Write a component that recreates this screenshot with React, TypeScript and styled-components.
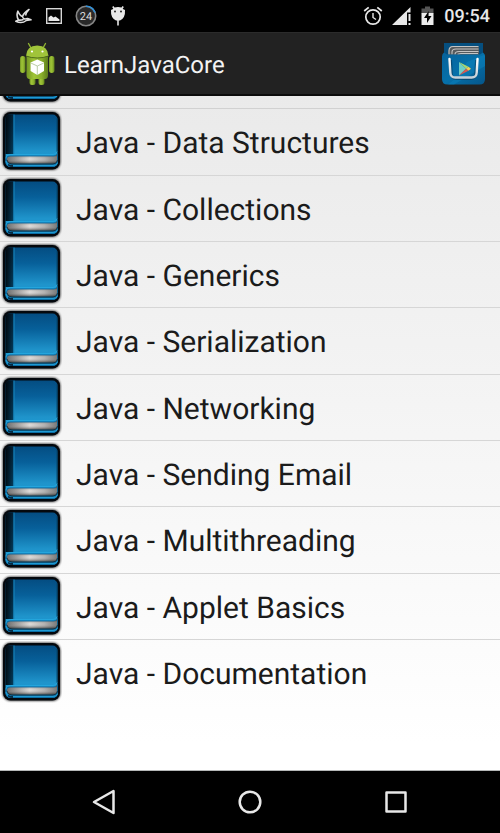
import React from "react";
import styled, { createGlobalStyle } from "styled-components";

const GlobalStyle = createGlobalStyle`
  * { box-sizing: border-box; }
  body {
    margin: 0;
    background: #000;
    font-family: Roboto, "Liberation Sans", sans-serif;
    text-rendering: geometricPrecision;
  }
`;

const Screen = styled.div`
  display: flex;
  flex-direction: column;
  min-height: 100vh;
  background: #000;
`;

const StatusBar = styled.div`
  display: flex;
  align-items: center;
  justify-content: space-between;
  height: 32px;
  padding: 0 10px 0 15px;
  background: #000;
`;

const StatusGroup = styled.div<{ $gap: number }>`
  display: flex;
  align-items: center;
  gap: ${(p) => p.$gap}px;
  svg { display: block; }
`;

const Clock = styled.time`
  padding-top: 2px;
  color: #e8e8e8;
  font-size: 18px;
  font-weight: 500;
  line-height: 24px;
`;

const ActionBar = styled.header`
  display: flex;
  align-items: center;
  height: 64px;
  padding: 0 15px 0 19px;
  background: #222;
  border-top: 1px solid #2b2b2b;
  border-bottom: 2px solid #0c0c0c;
  svg { display: block; }
`;

const Title = styled.h1`
  flex: 1;
  margin: 0 0 0 7px;
  padding-top: 2px;
  color: #f3f3f3;
  font-size: 24px;
  font-weight: 400;
  line-height: 32px;
`;

const StoreButton = styled.button`
  padding: 0;
  border: 0;
  background: none;
  cursor: pointer;
`;

const Content = styled.main`
  flex: 1;
  background: linear-gradient(#eaeaea, #fff 96%);
  border-bottom: 1px solid #b5b8b8;
`;

const List = styled.ul`
  margin: 0;
  padding: 0;
  list-style: none;
`;

const ClippedRow = styled.li`
  display: flex;
  align-items: flex-end;
  height: 13px;
  padding: 0 0 4px 1px;
  overflow: hidden;
  border-bottom: 1px solid #d1d1d1;
  svg { display: block; flex: none; }
`;

const Row = styled.li`
  height: 66px;
  border-bottom: 1px solid #d6d6d6;
  &:nth-child(3n + 2) { height: 67px; }
  &:last-child { border-bottom-color: transparent; }
`;

const RowButton = styled.button`
  display: flex;
  align-items: center;
  gap: 14px;
  width: 100%;
  height: 100%;
  padding: 0 0 2px 1px;
  border: 0;
  background: none;
  color: #1b1b1b;
  font-family: inherit;
  font-size: 30px;
  line-height: 36px;
  text-align: left;
  text-rendering: inherit;
  cursor: pointer;
  svg { display: block; flex: none; }
`;

const RowLabel = styled.span`
  padding-top: 6px;
`;

const NavBar = styled.nav`
  display: flex;
  align-items: center;
  justify-content: space-around;
  height: 62px;
  padding: 0 31px;
  background: #000;
`;

const NavButton = styled.button`
  display: flex;
  align-items: center;
  justify-content: center;
  width: 60px;
  height: 48px;
  padding: 0;
  border: 0;
  background: none;
  cursor: pointer;
`;

const Gradients = () => (
  <svg width="0" height="0" display="block" aria-hidden="true">
    <defs>
      <linearGradient id="cover" x1="0" y1="0" x2="0" y2="1">
        <stop offset="0" stopColor="#044d82" />
        <stop offset="0.3" stopColor="#07609a" />
        <stop offset="0.7" stopColor="#1f94cb" />
        <stop offset="1" stopColor="#1b9ad6" />
      </linearGradient>
      <linearGradient id="spine" x1="0" y1="0" x2="0" y2="1">
        <stop offset="0" stopColor="#02253f" />
        <stop offset="1" stopColor="#04466b" />
      </linearGradient>
      <linearGradient id="spineShade" x1="0" y1="0" x2="1" y2="0">
        <stop offset="0" stopColor="#000" stopOpacity="0.8" />
        <stop offset="1" stopColor="#000" stopOpacity="0.1" />
      </linearGradient>
      <linearGradient id="pages" x1="0" y1="0" x2="1" y2="0">
        <stop offset="0" stopColor="#5a5a5a" />
        <stop offset="0.45" stopColor="#dad7d4" />
        <stop offset="0.75" stopColor="#aaa9a8" />
        <stop offset="1" stopColor="#666" />
      </linearGradient>
      <linearGradient id="pageShade" x1="0" y1="0" x2="0" y2="1">
        <stop offset="0" stopColor="#111" stopOpacity="0.65" />
        <stop offset="0.5" stopColor="#fff" stopOpacity="0.1" />
        <stop offset="1" stopColor="#111" stopOpacity="0.6" />
      </linearGradient>
      <filter id="soft" x="-10%" y="-10%" width="120%" height="120%">
        <feGaussianBlur stdDeviation="0.8" />
      </filter>
      <linearGradient id="droid" x1="0" y1="0" x2="1" y2="0">
        <stop offset="0" stopColor="#739623" />
        <stop offset="0.35" stopColor="#a0c538" />
        <stop offset="0.7" stopColor="#8bb02c" />
        <stop offset="1" stopColor="#5d7d1c" />
      </linearGradient>
      <linearGradient id="store" x1="0" y1="0" x2="1" y2="1">
        <stop offset="0" stopColor="#07629b" />
        <stop offset="0.5" stopColor="#0670a9" />
        <stop offset="1" stopColor="#05568a" />
      </linearGradient>
      <linearGradient id="handle" x1="0" y1="0" x2="0" y2="1">
        <stop offset="0" stopColor="#fff" />
        <stop offset="1" stopColor="#c5d0d8" />
      </linearGradient>
    </defs>
  </svg>
);

const BookIcon = () => (
  <svg width="61" height="62" viewBox="0 0 61 62" aria-hidden="true">
    <rect x="1.5" y="1.5" width="58" height="58.5" rx="8" fill="#000" opacity="0.75" filter="url(#soft)" />
    <rect x="2" y="2" width="57" height="57.5" rx="7.500" fill="#04080d" />
    <rect x="4.500" y="4.500" width="52" height="52.500" rx="5" fill="url(#cover)" />
    <path d="M9 4.500h3.500V44H4.500V9q0-4.500 4.500-4.500z" fill="url(#spine)" />
    <path d="M9 4.500h3.500V44H4.500V9q0-4.500 4.500-4.500z" fill="url(#spineShade)" />
    <path d="M13 4.500V44" stroke="#1687be" strokeWidth="1" />
    <path d="M56 8v34" stroke="#064568" strokeWidth="1.200" opacity="0.7" />
    <path d="M56.500 43q-1 2.500-4 2.500H9.500q-5 0-5 4v2q0 5.500 6 5.500h41q5 0 5-5z" fill="#0b6ea5" />
    <path d="M56 41.500q-1 3-4 3H9.500q-4.500 0-4.500 4" fill="none" stroke="#23a5dc" strokeWidth="1" />
    <path d="M6 49q0-2.500 3.500-2.500h43q2.500 0 3.500-2v5q0 4-4 4H10q-4 0-4-4.500z" fill="url(#pages)" />
    <path d="M6 49q0-2.500 3.500-2.500h43q2.500 0 3.500-2v5q0 4-4 4H10q-4 0-4-4.500z" fill="url(#pageShade)" />
    <path d="M6 50q.5 4 5 4h41q4 0 4.500-4" fill="none" stroke="#102631" strokeWidth="0.8" />
    <path d="M5 51q1 4.500 6 4.500h41q4 0 4.500-3" fill="none" stroke="#1f9ad2" strokeWidth="1.200" />
    <path d="M7 55.500q2 1.500 5 1.500v-2q-3 0-5-1z" fill="#042b45" />
  </svg>
);

const AndroidIcon = () => (
  <svg width="38" height="44" viewBox="0 0 38 44" aria-hidden="true">
    <path d="M12 6l-2.500-4.500M24 6l2.500-4.500" stroke="#91b532" strokeWidth="1.400" strokeLinecap="round" />
    <rect x="1" y="14" width="5.500" height="17" rx="2.700" fill="url(#droid)" />
    <rect x="30" y="14" width="5.500" height="17" rx="2.700" fill="url(#droid)" />
    <rect x="10.500" y="30" width="6" height="13" rx="2.500" fill="url(#droid)" />
    <rect x="19.500" y="30" width="6" height="13" rx="2.500" fill="url(#droid)" />
    <path d="M7.500 15h21.500v18q0 4-3 4H10.500q-3 0-3-4z" fill="url(#droid)" />
    <path d="M7 14q.5-10.500 11.200-10.500T29.500 14q-5 2-11.300 2T7 14z" fill="#a0c43a" />
    <path d="M7 14q5 2 11.200 2t11.300-2" fill="none" stroke="#4e6c19" strokeWidth="1" />
    <circle cx="13" cy="9.500" r="1.100" fill="#fff" />
    <circle cx="23.500" cy="9.500" r="1.100" fill="#fff" />
    <path d="M18.300 17.500l6.700 3v8.500l-6.700 4-6.700-4v-8.500z" fill="#fff" />
    <path d="M11.800 21l6.500 3 6.500-3M18.300 24v9" fill="none" stroke="#b3c69c" strokeWidth="0.900" />
  </svg>
);

const StoreIcon = () => (
  <svg width="43" height="44" viewBox="0 0 43 44" aria-hidden="true">
    <path d="M2 1h39v13H2z" fill="#064f7f" />
    <path d="M6.500 13V8.500Q6.500 4 11 4h24q2 0 2 2v7z" fill="#565b5e" />
    <path d="M7 12.500V9q0-4.500 4-4.500h25.500M10 12.500V10q0-3 4-3h22.500M13 12.500q0-3 4-3h19.500M16 12.500q0-1 3-1h17" fill="none" stroke="#c4c4c4" strokeWidth="1.100" />
    <path d="M2 10.500l3 2h33l3-2q2 1.500 2 4V37q0 5.500-5.500 5.500h-32Q0 42.500 0 37V14.500q0-2.500 2-4z" fill="url(#store)" />
    <path d="M25 20L43 12.500V24L12 42.500H6L17 34z" fill="#0a86c2" opacity="0.450" />
    <path d="M8.500 18l.8 13.500q.2 5 5 5h14.500q4.800 0 5-5L34.600 18" fill="none" stroke="#06385c" strokeWidth="3" opacity="0.600" />
    <path d="M7.500 17l.8 13.500q.2 5 5 5h16.400q4.800 0 5-5L35.500 17" fill="none" stroke="url(#handle)" strokeWidth="2.400" strokeLinecap="round" />
    <path d="M17 20v13.500l7-6.700z" fill="#6ecfc5" />
    <path d="M17 20l9.500 4.800-2.500 2z" fill="#a8d56f" />
    <path d="M24 26.800l2.500-2 2.500 2-2.500 2z" fill="#f4ce54" />
    <path d="M17 33.500l7-6.700 2.500 2z" fill="#d75b50" />
  </svg>
);

const BirdIcon = () => (
  <svg width="18" height="16" viewBox="0 0 18 16" aria-hidden="true">
    <path d="M2.800 3.200Q1 8 3.500 12L.8 13.200q6 3 10.400-.7l4.800-.7-3.500-1.300Q8 12 7.500 8.500 5 8 2.800 3.200zM7.500 8.500Q9 4.500 14 1.500q-3 3-3.500 6M3.500 12q2.500.5 5-.5" fill="none" stroke="#dedede" strokeWidth="1.600" strokeLinejoin="round" />
  </svg>
);

const PictureIcon = () => (
  <svg width="16" height="16" viewBox="0 0 16 16" aria-hidden="true">
    <rect x="0.700" y="0.700" width="14.600" height="14.600" fill="none" stroke="#d7d7d7" strokeWidth="1.400" />
    <path d="M2.500 13V9.500L5 7.500l2.500 2 2-1 4 3V13z" fill="#e8e8e8" />
  </svg>
);

const BadgeIcon = () => (
  <svg width="22" height="22" viewBox="0 0 22 22" role="img" aria-label="24">
    <circle cx="11" cy="11" r="9.700" fill="#292929" stroke="#858585" strokeWidth="1.600" />
    <path d="M11 1.300A9.700 9.700 0 0 1 20 7.500" fill="none" stroke="#2e91dc" strokeWidth="1.600" />
    <text x="11" y="15" textAnchor="middle" fontSize="11" fontFamily="Roboto, sans-serif" fill="#ddd">24</text>
  </svg>
);

const DebugIcon = () => (
  <svg width="16" height="22" viewBox="0 0 16 22" aria-hidden="true">
    <path d="M4.500 4L2.800 1.500M11.500 4l1.700-2.500M8 14v6.500" stroke="#e5e5e5" strokeWidth="1.600" />
    <path d="M1 5q2.500-1 3.500-2.500Q8 1.500 11.500 2.500 12.500 4 15 5q.5 8-5 10.500H6Q.5 13 1 5z" fill="#e8e8e8" />
    <circle cx="5" cy="6.500" r="0.900" fill="#111" />
    <circle cx="11" cy="6.500" r="0.900" fill="#111" />
  </svg>
);

const AlarmIcon = () => (
  <svg width="20" height="20" viewBox="0 0 20 20" fill="none" stroke="#e8e8e8" aria-hidden="true">
    <circle cx="10" cy="11" r="7.200" strokeWidth="1.700" />
    <path d="M1.200 5l4.500-3.700M18.800 5l-4.500-3.700" strokeWidth="1.700" />
    <path d="M10 7v4.500l3 2" strokeWidth="1.400" />
  </svg>
);

const SignalIcon = () => (
  <svg width="20" height="20" viewBox="0 0 20 20" aria-hidden="true">
    <path d="M0 19L18.500 1v5.500H15V19z" fill="#e8e8e8" />
    <path d="M16.500 8h2v7h-2zM16.500 17h2v2h-2z" fill="#e8e8e8" />
  </svg>
);

const BatteryIcon = () => (
  <svg width="14" height="20" viewBox="0 0 14 20" aria-hidden="true">
    <path d="M4 .500h5v2h3.500v5H.500v-5H4z" fill="#555" />
    <path d="M.500 7h12v12H.500z" fill="#ececec" />
    <path d="M7.700 5L3 12h3v5l4.500-7h-3z" fill="#000" />
  </svg>
);

const chapters = [
  "Data Structures",
  "Collections",
  "Generics",
  "Serialization",
  "Networking",
  "Sending Email",
  "Multithreading",
  "Applet Basics",
  "Documentation",
];

export default function App() {
  return (
    <Screen>
      <GlobalStyle />
      <StatusBar>
        <StatusGroup $gap={13}>
          <BirdIcon />
          <PictureIcon />
          <BadgeIcon />
          <DebugIcon />
        </StatusGroup>
        <StatusGroup $gap={9}>
          <AlarmIcon />
          <SignalIcon />
          <BatteryIcon />
          <Clock>09:54</Clock>
        </StatusGroup>
      </StatusBar>
      <ActionBar>
        <AndroidIcon />
        <Title>LearnJavaCore</Title>
        <StoreButton type="button" aria-label="Open store">
          <StoreIcon />
        </StoreButton>
      </ActionBar>
      <Content>
        <List>
          <ClippedRow>
            <BookIcon />
          </ClippedRow>
          {chapters.map((chapter) => (
            <Row key={chapter}>
              <RowButton type="button">
                <BookIcon />
                <RowLabel>Java - {chapter}</RowLabel>
              </RowButton>
            </Row>
          ))}
        </List>
      </Content>
      <NavBar>
        <NavButton type="button" aria-label="Back">
          <svg width="26" height="26" viewBox="0 0 26 26" fill="none" stroke="#e8e8e8" strokeWidth="2.500" strokeLinejoin="round">
            <path d="M22.500 2v22L3 13z" />
          </svg>
        </NavButton>
        <NavButton type="button" aria-label="Home">
          <svg width="26" height="26" viewBox="0 0 26 26" fill="none" stroke="#e8e8e8" strokeWidth="2.500">
            <circle cx="13" cy="13" r="10.300" />
          </svg>
        </NavButton>
        <NavButton type="button" aria-label="Recent apps">
          <svg width="26" height="26" viewBox="0 0 26 26" fill="none" stroke="#e8e8e8" strokeWidth="2.500" strokeLinejoin="round">
            <rect x="3.500" y="3.500" width="19" height="19" />
          </svg>
        </NavButton>
      </NavBar>
      <Gradients />
    </Screen>
  );
}
